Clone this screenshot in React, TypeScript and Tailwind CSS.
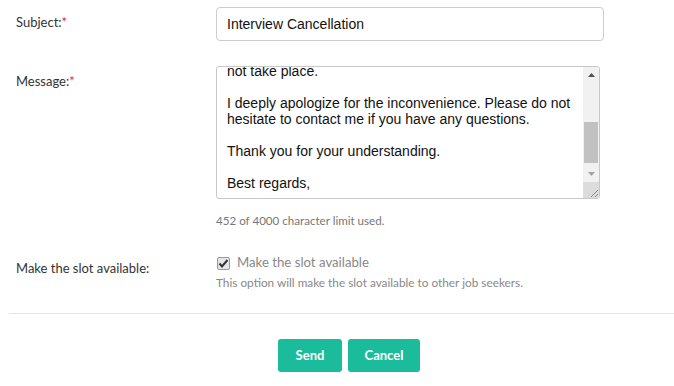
import React from "react";

const labelFont = { fontFamily: '"Source Sans Pro", Lato, "Noto Sans", sans-serif' };

export default function App() {
  const lines = [
    "Dear Candidate,",
    "",
    "Unfortunately, the interview scheduled for you will",
    "not take place.",
    "",
    "I deeply apologize for the inconvenience. Please do not",
    "hesitate to contact me if you have any questions.",
    "",
    "Thank you for your understanding.",
    "",
    "Best regards,",
    "",
  ];
  return (
    <div className="w-[674px] h-[386px] bg-white overflow-hidden pl-[9px]" style={labelFont}>
      {/* Subject */}
      <div className="flex pt-[7px]">
        <div className="w-[207px] pl-[7px] pt-[5px] text-[13px] leading-[20px] text-[#333]">
          Subject:<span className="text-[#e3262b]">*</span>
        </div>
        <div className="w-[388px] h-[34px] border border-[#cccccc] rounded-[4px] px-[10px] flex items-center text-[14px] text-[#111]"
          style={{ fontFamily: '"Liberation Sans", Arial, sans-serif' }}>
          Interview Cancellation
        </div>
      </div>
      {/* Message */}
      <div className="flex mt-[25px]">
        <div className="w-[207px] pl-[7px] pt-[5px] text-[13px] leading-[20px] text-[#333]">
          Message:<span className="text-[#e3262b]">*</span>
        </div>
        <div className="flex flex-col">
          <div className="w-[384px] h-[133px] border border-[#c8c8c8] rounded-[3px] flex overflow-hidden">
            <div className="flex-1 overflow-hidden pl-[10px] text-[14px] leading-[16px] text-[#111]"
              style={{ fontFamily: '"Liberation Sans", Arial, sans-serif' }}>
              <div className="mt-[-52px]">
                {lines.map((l, i) => (
                  <div key={i} className="h-[16px] whitespace-nowrap">{l}</div>
                ))}
              </div>
            </div>
            <div className="w-[16px] bg-[#f1f1f1] flex flex-col">
              <div className="h-[16px] flex items-center justify-center">
                <svg width="7" height="4" viewBox="0 0 7 4"><path d="M0 4 L3.5 0 L7 4 Z" fill="#505050" /></svg>
              </div>
              <div className="h-[39px]" />
              <div className="h-[41px] mx-[1px] bg-[#c1c1c1]" />
              <div className="flex-1" />
              <div className="h-[16px] flex items-center justify-center">
                <svg width="7" height="4" viewBox="0 0 7 4"><path d="M0 0 L3.5 4 L7 0 Z" fill="#a3a3a3" /></svg>
              </div>
              <div className="h-[16px] bg-[#dcdcdc] flex items-end justify-end">
                <svg width="10" height="10" viewBox="0 0 10 10">
                  <path d="M9 2 L2 9 M9 6 L6 9" stroke="#8a8a8a" strokeWidth="1" />
                </svg>
              </div>
            </div>
          </div>
          <div className="mt-[14px] text-[11.6px] leading-[16px] text-[#777]">
            452 of 4000 character limit used.
          </div>
        </div>
      </div>
      {/* Slot */}
      <div className="flex mt-[24px]">
        <div className="w-[207px] pl-[7px] pt-[5px] text-[13px] leading-[20px] text-[#333]">
          Make the slot available:
        </div>
        <div className="flex flex-col">
          <div className="flex items-center h-[20px]">
            <div className="w-[13px] h-[13px] ml-[1px] border border-[#999] rounded-[2px] bg-[#e6e6e6] flex items-center justify-center">
              <svg width="11" height="11" viewBox="0 0 11 11">
                <path d="M1.5 5.5 L4 8.5 L9.5 2" stroke="#333" strokeWidth="2" fill="none" />
              </svg>
            </div>
            <span className="ml-[7px] text-[13.2px] text-[#888]">Make the slot available</span>
          </div>
          <div className="text-[11.8px] leading-[20px] text-[#888]">
            This option will make the slot available to other job seekers.
          </div>
        </div>
      </div>
      <div className="mt-[20px] h-[1px] bg-[#e5e5e5]" />
      <div className="flex justify-center gap-[6px] mt-[25px] pl-[15px]">
        <button className="w-[64px] h-[33px] bg-[#1abc9c] text-white text-[13px] font-bold rounded-[3px]">Send</button>
        <button className="w-[72px] h-[33px] bg-[#1abc9c] text-white text-[13px] font-bold rounded-[3px]">Cancel</button>
      </div>
    </div>
  );
}
